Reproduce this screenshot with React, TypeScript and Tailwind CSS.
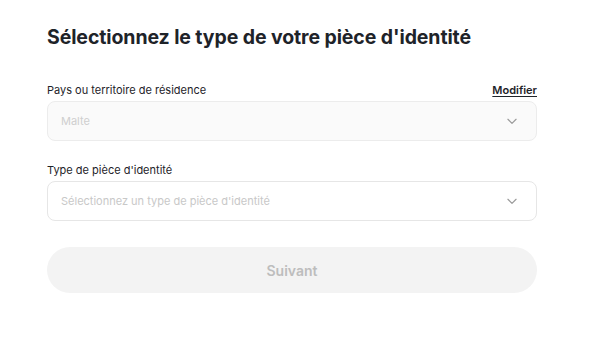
import React from 'react';

const Chevron: React.FC = () => (
  <svg width="14" height="14" viewBox="0 0 24 24" fill="none" stroke="#9a9a9a" strokeWidth="2" strokeLinecap="round" strokeLinejoin="round">
    <path d="M5 9l7 7 7-7" />
  </svg>
);

const App: React.FC = () => {
  return (
    <div className="w-[605px] h-[338px] bg-white font-['Inter',sans-serif] text-[#1e2329]">
      <div className="w-[490px] ml-[47px] pt-[25px]">
        <h1 className="text-[19.5px] leading-[24px] font-bold tracking-[-0.1px]">
          Sélectionnez le type de votre pièce d'identité
        </h1>

        <div className="mt-[33px] flex items-end justify-between">
          <span className="text-[11px] leading-[16px]">Pays ou territoire de résidence</span>
          <span className="text-[11px] leading-[16px] font-semibold underline underline-offset-2">Modifier</span>
        </div>
        <div className="mt-[3px] h-[40px] rounded-[8px] border border-[#ececec] bg-[#fafafa] flex items-center justify-between pl-[13px] pr-[17px]">
          <span className="text-[11px] text-[#cfcfcf]">Malte</span>
          <Chevron />
        </div>

        <div className="mt-[21px] text-[11px] leading-[16px]">Type de pièce d'identité</div>
        <div className="mt-[3px] h-[40px] rounded-[8px] border border-[#e6e6e6] bg-white flex items-center justify-between pl-[13px] pr-[17px]">
          <span className="text-[11px] text-[#c8c8c8]">Sélectionnez un type de pièce d'identité</span>
          <Chevron />
        </div>

        <button className="mt-[26px] w-full h-[46px] rounded-full bg-[#f3f3f3] text-[14px] font-semibold text-[#bdbdbd]">
          Suivant
        </button>
      </div>
    </div>
  );
};

export default App;
